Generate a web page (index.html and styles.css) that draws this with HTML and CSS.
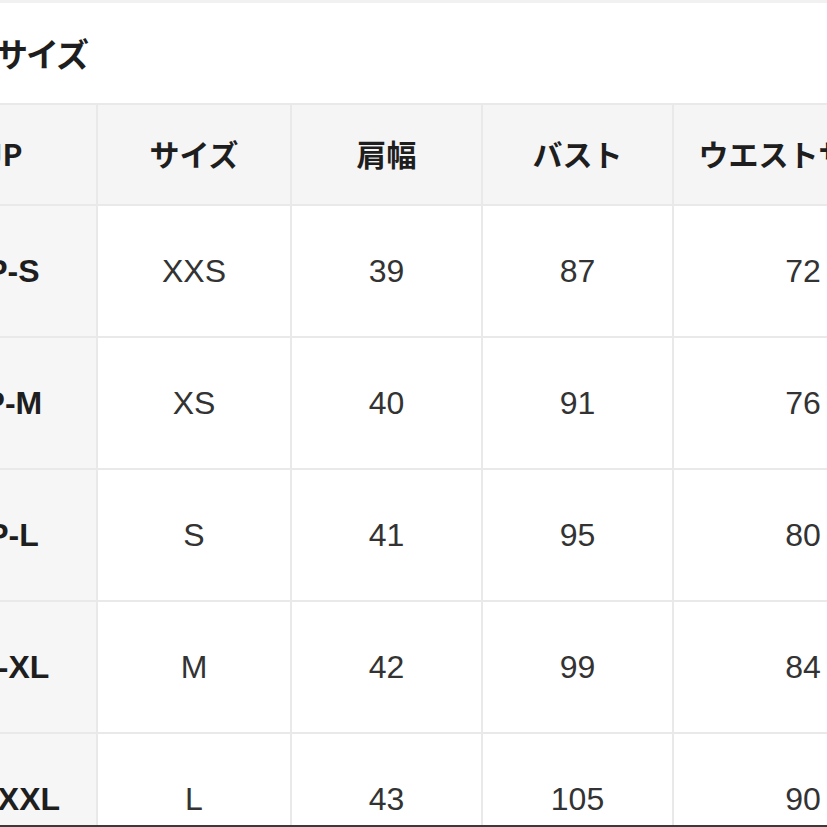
FILE: index.html
```html
<!DOCTYPE html>
<html lang="ja">
<head>
<meta charset="utf-8">
<title>サイズ</title>
<link rel="stylesheet" href="styles.css">
</head>
<body>
<div class="page">
  <div class="title-bar">
    <h2 class="title">サイズ</h2>
  </div>
  <div class="chart">
    <div class="cell head first">JP</div>
    <div class="cell head">サイズ</div>
    <div class="cell head">肩幅</div>
    <div class="cell head">バスト</div>
    <div class="cell head">ウエストサイズ</div>

    <div class="cell first">JP-S</div>
    <div class="cell">XXS</div>
    <div class="cell">39</div>
    <div class="cell">87</div>
    <div class="cell">72</div>

    <div class="cell first">JP-M</div>
    <div class="cell">XS</div>
    <div class="cell">40</div>
    <div class="cell">91</div>
    <div class="cell">76</div>

    <div class="cell first">JP-L</div>
    <div class="cell">S</div>
    <div class="cell">41</div>
    <div class="cell">95</div>
    <div class="cell">80</div>

    <div class="cell first">JP-XL</div>
    <div class="cell">M</div>
    <div class="cell">42</div>
    <div class="cell">99</div>
    <div class="cell">84</div>

    <div class="cell first">JP-XXL</div>
    <div class="cell">L</div>
    <div class="cell">43</div>
    <div class="cell">105</div>
    <div class="cell">90</div>
  </div>
</div>
<div class="edge"></div>
</body>
</html>
```
FILE: styles.css
```css
html, body {
  margin: 0;
  padding: 0;
  background: #ffffff;
  overflow: hidden;
  height: 100%;
}

body {
  font-family: "Liberation Sans", "Noto Sans CJK JP", sans-serif;
  color: #333333;
}

.page {
  border-top: 3px solid #f1f1f1;
}

.title-bar {
  height: 100px;
  display: flex;
  align-items: center;
}

.title {
  margin: 0 0 0 -5px;
  font-family: "Noto Sans CJK JP", sans-serif;
  font-size: 33px;
  font-weight: 700;
  color: #1e1e1e;
  letter-spacing: -2px;
}

.chart {
  display: grid;
  grid-template-columns: 184px 192px 189px 189px 258px;
  grid-template-rows: 99px repeat(5, 130px);
  gap: 2px;
  padding-top: 2px;
  background: #e9e9e9;
  margin-left: -88px;
  width: max-content;
}

.cell {
  background: #ffffff;
  display: flex;
  align-items: center;
  justify-content: center;
  font-size: 32px;
  white-space: nowrap;
  overflow: hidden;
}

.cell.first {
  background: #f6f6f6;
  font-weight: 700;
  color: #1e1e1e;
}

.cell.head {
  background: #f5f5f5;
  font-family: "Noto Sans CJK JP", sans-serif;
  font-size: 30px;
  font-weight: 700;
  color: #1e1e1e;
  padding-bottom: 4px;
  box-sizing: border-box;
}

.edge {
  position: fixed;
  left: 0;
  right: 0;
  bottom: 0;
  height: 2px;
  background: #3a3a3a;
}
```
